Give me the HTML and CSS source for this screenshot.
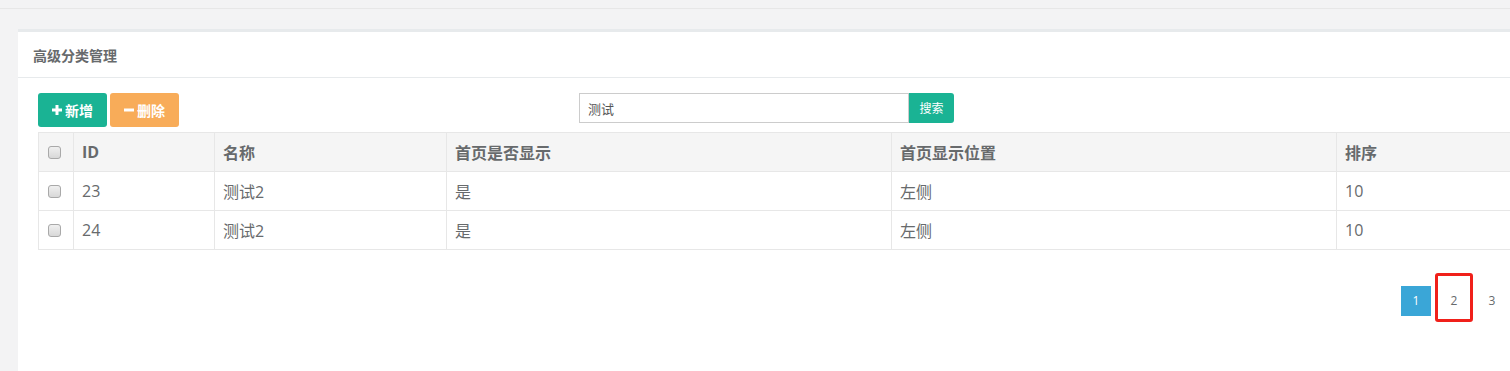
FILE: index.html
```html
<!DOCTYPE html>
<html lang="zh-CN">
<head>
    <meta charset="UTF-8">
    <title>高级分类管理</title>
    <link rel="stylesheet" href="styles.css">
</head>
<body>
    <div class="topbar"></div>
    <div class="wrapper">
        <div class="ibox">
            <div class="ibox-title">
                <h5>高级分类管理</h5>
            </div>
            <div class="ibox-content">
                <div class="toolbar">
                    <button class="btn btn-primary">
                        <svg class="ico" width="10" height="10" viewBox="0 0 10 10"><path d="M3.5 0h3v3.5H10v3H6.5V10h-3V6.5H0v-3h3.5z" fill="#fff"/></svg>新增
                    </button>
                    <button class="btn btn-warning">
                        <svg class="ico" width="10" height="10" viewBox="0 0 10 10"><path d="M0 3.5h10v3H0z" fill="#fff"/></svg>删除
                    </button>
                    <div class="search">
                        <input class="search-input" type="text" value="测试">
                        <button class="search-btn">搜索</button>
                    </div>
                </div>
                <table class="grid">
                    <colgroup>
                        <col style="width:35px">
                        <col style="width:141px">
                        <col style="width:232px">
                        <col style="width:445px">
                        <col style="width:445px">
                        <col>
                    </colgroup>
                    <thead>
                        <tr>
                            <th><input class="chk" type="checkbox"></th>
                            <th>ID</th>
                            <th>名称</th>
                            <th>首页是否显示</th>
                            <th>首页显示位置</th>
                            <th>排序</th>
                        </tr>
                    </thead>
                    <tbody>
                        <tr>
                            <td><input class="chk" type="checkbox"></td>
                            <td>23</td>
                            <td>测试2</td>
                            <td>是</td>
                            <td>左侧</td>
                            <td>10</td>
                        </tr>
                        <tr>
                            <td><input class="chk" type="checkbox"></td>
                            <td>24</td>
                            <td>测试2</td>
                            <td>是</td>
                            <td>左侧</td>
                            <td>10</td>
                        </tr>
                    </tbody>
                </table>
                <ul class="pager">
                    <li class="active">1</li>
                    <li class="marked">2<span class="mark"></span></li>
                    <li>3</li>
                </ul>
            </div>
        </div>
    </div>
</body>
</html>
```

FILE: styles.css
```css
html, body {
    margin: 0;
    padding: 0;
}
body {
    background: #f3f3f4;
    font-family: "Open Sans", "Noto Sans CJK SC", sans-serif;
    color: #676a6c;
    overflow: hidden;
    height: 371px;
}
.topbar {
    height: 8px;
    border-bottom: 1px solid #e7e7e7;
}
.wrapper {
    padding: 20px 0 0 18px;
}
.ibox {
    background: #fff;
    overflow: hidden;
    height: 342px;
}
.ibox-title {
    box-sizing: border-box;
    height: 48px;
    border-top: 3px solid #e7eaec;
    padding: 14px 15px 0;
}
.ibox-title h5 {
    margin: 0;
    font-size: 14px;
    line-height: 19px;
    font-weight: bold;
}
.ibox-content {
    border-top: 1px solid #e7eaec;
    padding: 15px 0 0 20px;
}

.toolbar {
    display: flex;
    align-items: flex-start;
}
.btn {
    display: flex;
    align-items: center;
    justify-content: center;
    gap: 3px;
    width: 69px;
    height: 34px;
    margin-right: 3px;
    padding: 0;
    border: 0;
    border-radius: 3px;
    color: #fff;
    font-family: inherit;
    font-size: 14px;
    font-weight: bold;
}
.btn-primary {
    background: #1ab394;
}
.btn-warning {
    background: #f8ac59;
}
.search {
    display: flex;
    margin-left: 397px;
}
.search-input {
    box-sizing: border-box;
    width: 330px;
    height: 30px;
    margin: 0;
    padding: 0 8px;
    border: 1px solid #cccccc;
    font-family: inherit;
    font-size: 13px;
    color: #555;
    outline: none;
}
.search-btn {
    width: 45px;
    height: 30px;
    margin: 0;
    padding: 0;
    border: 0;
    border-radius: 0 3px 3px 0;
    background: #1ab394;
    color: #fff;
    font-family: inherit;
    font-size: 12px;
}

.grid {
    width: 1560px;
    margin-top: 5px;
    border-collapse: collapse;
    table-layout: fixed;
    font-size: 16px;
}
.grid th, .grid td {
    height: 38px;
    padding: 0 8px;
    border: 1px solid #e7e7e7;
    text-align: left;
    vertical-align: middle;
    white-space: nowrap;
}
.grid th {
    background: #f5f5f5;
    font-weight: bold;
}
.chk {
    appearance: none;
    display: block;
    box-sizing: border-box;
    width: 13px;
    height: 13px;
    margin: 0 0 0 1px;
    border: 1px solid #a9a9a9;
    border-radius: 3px;
    background: linear-gradient(#f0f0f0, #d8d8d8);
}

.pager {
    display: flex;
    justify-content: flex-end;
    gap: 8px;
    margin: 36px 0 0;
    padding: 0 3px 0 0;
    list-style: none;
}
.pager li {
    position: relative;
    width: 30px;
    height: 30px;
    line-height: 30px;
    text-align: center;
    font-size: 12px;
    color: #676a6c;
}
.pager li.active {
    background: #3aa6d7;
    color: #fff;
}
.pager .mark {
    position: absolute;
    left: -4px;
    top: -13px;
    box-sizing: border-box;
    width: 38px;
    height: 49px;
    border: 3px solid #f0201a;
    border-radius: 3px;
}
```
